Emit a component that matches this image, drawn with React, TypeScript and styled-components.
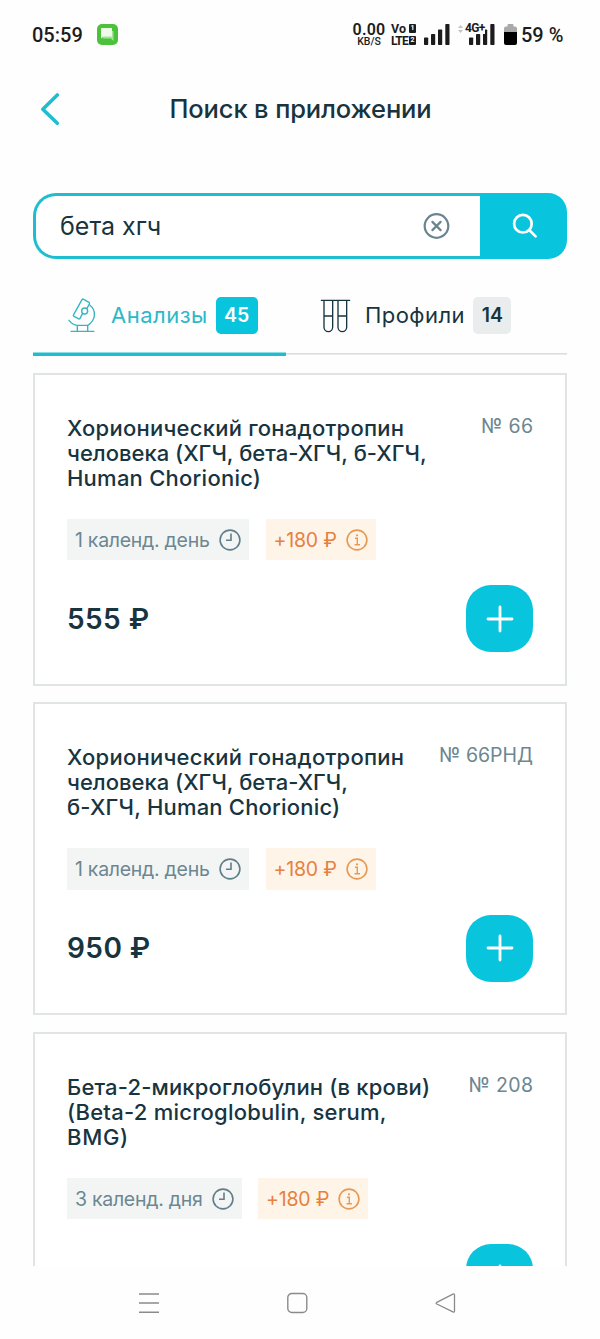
import React from "react";
import styled, { createGlobalStyle } from "styled-components";

const accent = "#08c4dc";
const ink = "#17343f";
const muted = "#6c8791";
const orange = "#e5813f";

const GlobalStyle = createGlobalStyle`
  *, *::before, *::after { box-sizing: border-box; }
  body { margin: 0; background: #fefefe; }
  svg { display: block; flex: none; }
`;

const Screen = styled.div`
  width: 600px;
  height: 1339px;
  display: flex;
  flex-direction: column;
  overflow: hidden;
  background: #fefefe;
  color: ${ink};
  font-family: Inter, "Noto Sans", sans-serif;
`;

const StatusBar = styled.div`
  height: 68px;
  padding: 1px 36px 0 32px;
  display: flex;
  align-items: center;
  flex: none;
  color: #1c1c1c;
  font-family: Roboto, sans-serif;
`;

const Clock = styled.span`
  width: 64.5px;
  font-size: 20px;
  font-weight: 500;
`;

const StatusIcons = styled.div`
  margin-left: auto;
  display: flex;
  align-items: center;
`;

const Stack = styled.div<{ $w: number }>`
  width: ${(p) => p.$w}px;
  display: flex;
  flex-direction: column;
  align-items: center;
  white-space: nowrap;
`;

const StackLine = styled.span<{ $size: number; $lh: number; $weight?: number; $ls?: number }>`
  display: flex;
  align-items: center;
  font-size: ${(p) => p.$size}px;
  line-height: ${(p) => p.$lh}px;
  font-weight: ${(p) => p.$weight ?? 500};
  letter-spacing: ${(p) => p.$ls ?? 0}px;
`;

const Sim = styled.span<{ $ml: number }>`
  width: 7px;
  height: 9px;
  margin-left: ${(p) => p.$ml}px;
  border-radius: 1px;
  background: #1c1c1c;
  color: #fff;
  font-size: 7px;
  line-height: 9px;
  letter-spacing: 0;
  text-align: center;
`;

const Signal = styled.div<{ $ml: number; $up?: number }>`
  position: relative;
  margin-left: ${(p) => p.$ml}px;
  margin-bottom: ${(p) => p.$up ?? 0}px;
`;

const NetType = styled.span`
  position: absolute;
  left: -4px;
  top: -1px;
  height: 11px;
  font-size: 12px;
  line-height: 11px;
  font-weight: 700;
  letter-spacing: -0.7px;
  background: #fefefe;
`;

const Percent = styled.span`
  width: 43px;
  margin-left: 4px;
  font-size: 20px;
  font-weight: 500;
  white-space: nowrap;
`;

const Header = styled.header`
  height: 82px;
  padding: 0 39px 0 40px;
  display: grid;
  grid-template-columns: 40px 1fr 40px;
  align-items: center;
  flex: none;
`;

const HeaderTitle = styled.h1`
  margin: 0;
  text-align: center;
  font-size: 25.5px;
  font-weight: 550;
  line-height: 30px;
  letter-spacing: -0.13px;
  white-space: nowrap;
`;

const SearchBox = styled.div`
  height: 66.5px;
  margin: 42.7px 33px 0;
  display: flex;
  flex: none;
`;

const Query = styled.div`
  flex: 1;
  padding: 0 30px 0 24px;
  display: flex;
  align-items: center;
  justify-content: space-between;
  border: 3.4px solid #1fbdd0;
  border-right: 0;
  border-radius: 23px 0 0 23px;
  background: #fff;
  font-size: 25px;
`;

const SearchButton = styled.div`
  width: 87px;
  padding-left: 2px;
  display: flex;
  align-items: center;
  justify-content: center;
  border-radius: 0 19px 19px 0;
  background: ${accent};
`;

const Tabs = styled.nav`
  height: 96.8px;
  margin: 0 33px;
  display: flex;
  flex: none;
`;

const Tab = styled.div<{ $active?: boolean }>`
  width: ${(p) => (p.$active ? 253 : 281)}px;
  padding: 36.5px 0 0 ${(p) => (p.$active ? 33 : 34)}px;
  display: flex;
  align-items: flex-start;
  color: ${(p) => (p.$active ? "#2bb9c9" : ink)};
  box-shadow: inset 0 ${(p) => (p.$active ? "-3.5px 0 #1fbdd0" : "0 0 transparent")};
  background: ${(p) =>
    p.$active ? "none" : "linear-gradient(#d9dfe1, #d9dfe1) 0 94px / 100% 1.6px no-repeat"};
`;

const TabLabel = styled.span<{ $w: number; $ls: number }>`
  width: ${(p) => p.$w}px;
  margin-left: 14px;
  font-size: 22px;
  line-height: 38px;
  letter-spacing: ${(p) => p.$ls}px;
  white-space: nowrap;
`;

const Badge = styled.span<{ $active?: boolean; $w: number }>`
  width: ${(p) => p.$w}px;
  height: 37px;
  margin-top: 1.3px;
  border-radius: 5px;
  text-align: center;
  font-size: 19.5px;
  line-height: 37px;
  font-weight: 600;
  color: ${(p) => (p.$active ? "#fff" : ink)};
  background: ${(p) => (p.$active ? accent : "#e9edee")};
`;

const Results = styled.main`
  flex: 1;
  min-height: 0;
  overflow: hidden;
  padding: 17px 33px 0;
  display: flex;
  flex-direction: column;
  gap: 16.6px;
`;

const Card = styled.article`
  height: 312.9px;
  flex: none;
  padding: 41px 32px 31px;
  border: 2px solid #e0e4e5;
  background: #fff;
  display: flex;
  flex-direction: column;
`;

const CardHead = styled.div`
  display: flex;
  justify-content: space-between;
  height: 75px;
`;

const CardTitle = styled.h2`
  margin: 0;
  font-size: 22px;
  line-height: 25px;
  font-weight: 550;
`;

const TitleLine = styled.span<{ $ls: number }>`
  display: block;
  letter-spacing: ${(p) => p.$ls}px;
  white-space: nowrap;
`;

const Code = styled.span<{ $ls: number }>`
  margin-top: -3px;
  font-size: 19.5px;
  line-height: 26px;
  letter-spacing: ${(p) => p.$ls}px;
  margin-right: ${(p) => -p.$ls}px;
  color: ${muted};
  white-space: nowrap;
`;

const Chips = styled.div`
  display: flex;
  gap: 16.5px;
  margin-top: 28px;
`;

const Chip = styled.div<{ $w: number; $warm?: boolean; $ls: number }>`
  width: ${(p) => p.$w}px;
  height: 41.5px;
  padding: 0 8px;
  display: flex;
  align-items: center;
  justify-content: space-between;
  font-size: 19.5px;
  letter-spacing: ${(p) => p.$ls}px;
  white-space: nowrap;
  color: ${(p) => (p.$warm ? orange : muted)};
  background: ${(p) => (p.$warm ? "#fff4e8" : "#f3f5f5")};
`;

const CardFoot = styled.div`
  margin-top: 25px;
  display: flex;
  align-items: center;
  justify-content: space-between;
`;

const Price = styled.span<{ $ls: number }>`
  font-size: 28px;
  line-height: 34px;
  font-weight: 580;
  letter-spacing: ${(p) => p.$ls}px;
`;

const AddButton = styled.div`
  width: 67px;
  height: 67px;
  border-radius: 25px;
  background: ${accent};
  display: flex;
  align-items: center;
  justify-content: center;
`;

const NavBar = styled.footer`
  height: 73px;
  flex: none;
  padding: 0 143.5px 0 138px;
  display: flex;
  align-items: center;
  justify-content: space-between;
`;

const MessageIcon = () => (
  <svg width="21" height="21" viewBox="0 0 21 21">
    <rect width="21" height="21" rx="5" fill="#4cc23c" />
    <path d="M6.500 7h10v10l-2.500-2.500h-8z" fill="#a5e39a" />
    <path d="M4 4h11v8.500h-8.500l-2.500 2z" fill="#effbe9" />
  </svg>
);

const Bars = () => (
  <svg width="26" height="21" viewBox="0 0 26 21" fill="#1c1c1c">
    <rect x="0" y="13.500" width="4.200" height="7.500" rx=".7" />
    <rect x="7" y="10" width="4.200" height="11" rx=".7" />
    <rect x="14" y="5.500" width="4.200" height="15.500" rx=".7" />
    <rect x="21.300" y="0" width="4.200" height="21" rx=".7" />
  </svg>
);

const Traffic = () => (
  <svg width="5" height="8" viewBox="0 0 5 8" fill="#c4c4c4">
    <path d="M0 3L2.500 0 5 3zM0 5l2.500 3L5 5z" />
  </svg>
);

const Battery = () => (
  <svg width="13" height="21" viewBox="0 0 13 21">
    <path d="M0 4.500Q0 2.500 2 2.500H3.500V1Q3.500 0 4.500 0H8.500Q9.500 0 9.500 1V2.500H11Q13 2.500 13 4.500V9H0z" fill="#a9a9a9" />
    <path d="M0 8h13v11q0 2-2 2H2q-2 0-2-2z" fill="#000" />
  </svg>
);

const BackIcon = () => (
  <svg width="20" height="34" viewBox="0 0 20 34" fill="none" stroke="#1fbdd0" strokeWidth="3.600" strokeLinecap="round" strokeLinejoin="round">
    <path d="M17.300 3L2.800 17.300 17.300 31.300" />
  </svg>
);

const ClearIcon = () => (
  <svg width="28" height="28" viewBox="0 0 28 28" fill="none" stroke="#6a8490" strokeWidth="2.200" strokeLinecap="round">
    <circle cx="14.500" cy="14" r="11.800" />
    <path d="M10.400 9.900l8.200 8.200M18.600 9.900l-8.200 8.200" />
  </svg>
);

const SearchIcon = () => (
  <svg width="26" height="26" viewBox="0 0 26 26" fill="none" stroke="#fff" strokeWidth="2.700" strokeLinecap="round">
    <circle cx="10.900" cy="10.700" r="8.800" />
    <path d="M17.400 17.200l6.200 6.200" />
  </svg>
);

const MicroscopeIcon = () => (
  <svg width="31" height="37" viewBox="138 348 93 111" fill="none" stroke="#36b5c2" strokeWidth="4.200" strokeLinejoin="round" strokeLinecap="round">
    <path d="M186 359Q188 356 191 358L207 367Q209 369 208 372L201 385M188 400L180 415Q178 418 175 416L162 409Q159 407 161 404L186 359" />
    <circle cx="194" cy="393" r="9" />
    <path d="M209 375C230 391 228 421 203 436M147 421Q158 435 172 436H203M172 436V453M203 436V453M153 454H222" />
  </svg>
);

const TubesIcon = () => (
  <svg width="31" height="37" viewBox="60 348 93 111" fill="none" stroke={ink} strokeWidth="4" strokeLinecap="round">
    <path d="M64 361H149M72 361V441A13 14 0 0 0 98 441V361M114 361V441A13 14 0 0 0 140 441V361M72 408H98M114 408H140" />
  </svg>
);

const ClockIcon = () => (
  <svg width="22" height="22" viewBox="0 0 22 22" fill="none" stroke="#607f89" strokeWidth="1.600">
    <circle cx="11" cy="11" r="9.900" />
    <path d="M12 4.500V11.300H7" />
  </svg>
);

const InfoIcon = () => (
  <svg width="22" height="22" viewBox="0 0 22 22" fill="none" stroke="#e79a55" strokeWidth="1.600">
    <circle cx="11" cy="11" r="9.900" />
    <path d="M9 9.300H11.300V15.800M8.500 15.800H14" strokeWidth="1.400" />
    <circle cx="11" cy="6.300" r="1.100" fill="#e79a55" stroke="none" />
  </svg>
);

const PlusIcon = () => (
  <svg width="28" height="28" viewBox="0 0 28 28" stroke="#fff" strokeWidth="2.800" strokeLinecap="round">
    <path d="M14 2v24M2 14h24" />
  </svg>
);

const MenuIcon = () => (
  <svg width="22" height="22" viewBox="0 0 22 22" stroke="#8b8b8b" strokeWidth="1.500">
    <path d="M1 2h20M1 11h20M1 20.200h20" />
  </svg>
);

const HomeIcon = () => (
  <svg width="22" height="22" viewBox="0 0 22 22" fill="none" stroke="#8b8b8b" strokeWidth="1.400">
    <rect x="1.800" y="1.500" width="19" height="19" rx="4" />
  </svg>
);

const ReturnIcon = () => (
  <svg width="22" height="22" viewBox="0 0 22 22" fill="none" stroke="#8b8b8b" strokeWidth="1.300" strokeLinejoin="round">
    <path d="M1.800 10.300L17.900 2.100Q19.500 1.500 19.500 3.100V19Q19.500 20.600 17.900 19.900L1.800 12Q.5 11.100 1.800 10.300z" />
  </svg>
);

type Line = [text: string, spacing: number];

interface Analysis {
  lines: Line[];
  code: Line;
  term: Line;
  termWidth: number;
  price: Line;
}

const analyses: Analysis[] = [
  {
    lines: [
      ["Хорионический гонадотропин", 0.25],
      ["человека (ХГЧ, бета-ХГЧ, б-ХГЧ,", 0.01],
      ["Human Chorionic)", 0.24],
    ],
    code: ["№ 66", 0.35],
    term: ["1 календ. день", -0.28],
    termWidth: 182,
    price: ["555 ₽", 0.45],
  },
  {
    lines: [
      ["Хорионический гонадотропин", 0.25],
      ["человека (ХГЧ, бета-ХГЧ,", 0.01],
      ["б-ХГЧ, Human Chorionic)", 0.2],
    ],
    code: ["№ 66РНД", 0],
    term: ["1 календ. день", -0.28],
    termWidth: 182,
    price: ["950 ₽", 0.45],
  },
  {
    lines: [
      ["Бета-2-микроглобулин (в крови)", 0.16],
      ["(Beta-2 microglobulin, serum,", 0.25],
      ["BMG)", 0.7],
    ],
    code: ["№ 208", 0.35],
    term: ["3 календ. дня", -0.28],
    termWidth: 174.5,
    price: ["", 0],
  },
];

const AnalysisCard = ({ item }: { item: Analysis }) => (
  <Card>
    <CardHead>
      <CardTitle>
        {item.lines.map(([text, ls]) => (
          <TitleLine key={text} $ls={ls}>{text}</TitleLine>
        ))}
      </CardTitle>
      <Code $ls={item.code[1]}>{item.code[0]}</Code>
    </CardHead>
    <Chips>
      <Chip $w={item.termWidth} $ls={item.term[1]}>
        {item.term[0]}
        <ClockIcon />
      </Chip>
      <Chip $w={110} $warm $ls={-0.2}>
        +180 ₽
        <InfoIcon />
      </Chip>
    </Chips>
    <CardFoot>
      <Price $ls={item.price[1]}>{item.price[0]}</Price>
      <AddButton>
        <PlusIcon />
      </AddButton>
    </CardFoot>
  </Card>
);

export default function App() {
  return (
    <Screen>
      <GlobalStyle />
      <StatusBar>
        <Clock>05:59</Clock>
        <MessageIcon />
        <StatusIcons>
          <Stack $w={34}>
            <StackLine $size={16} $lh={14} $weight={600} $ls={0.2}>0.00</StackLine>
            <StackLine $size={10.5} $lh={10}>KB/S</StackLine>
          </Stack>
          <Stack $w={35}>
            <StackLine $size={12.5} $lh={12} $weight={700}>Vo<Sim $ml={3}>1</Sim></StackLine>
            <StackLine $size={12} $lh={12} $weight={700} $ls={-0.7}>LTE<Sim $ml={1}>2</Sim></StackLine>
          </Stack>
          <Signal $ml={3}>
            <Bars />
          </Signal>
          <Signal $ml={8} $up={11}>
            <Traffic />
          </Signal>
          <Signal $ml={6}>
            <Bars />
            <NetType>4G+</NetType>
          </Signal>
          <Signal $ml={9}>
            <Battery />
          </Signal>
          <Percent>59 %</Percent>
        </StatusIcons>
      </StatusBar>
      <Header>
        <BackIcon />
        <HeaderTitle>Поиск в приложении</HeaderTitle>
      </Header>
      <SearchBox>
        <Query>
          бета хгч
          <ClearIcon />
        </Query>
        <SearchButton>
          <SearchIcon />
        </SearchButton>
      </SearchBox>
      <Tabs>
        <Tab $active>
          <MicroscopeIcon />
          <TabLabel $w={104.500} $ls={0.5}>Анализы</TabLabel>
          <Badge $active $w={42.5}>45</Badge>
        </Tab>
        <Tab>
          <TubesIcon />
          <TabLabel $w={108.3} $ls={0.45}>Профили</TabLabel>
          <Badge $w={38}>14</Badge>
        </Tab>
      </Tabs>
      <Results>
        {analyses.map((item) => (
          <AnalysisCard key={item.code[0]} item={item} />
        ))}
      </Results>
      <NavBar>
        <MenuIcon />
        <HomeIcon />
        <ReturnIcon />
      </NavBar>
    </Screen>
  );
}
